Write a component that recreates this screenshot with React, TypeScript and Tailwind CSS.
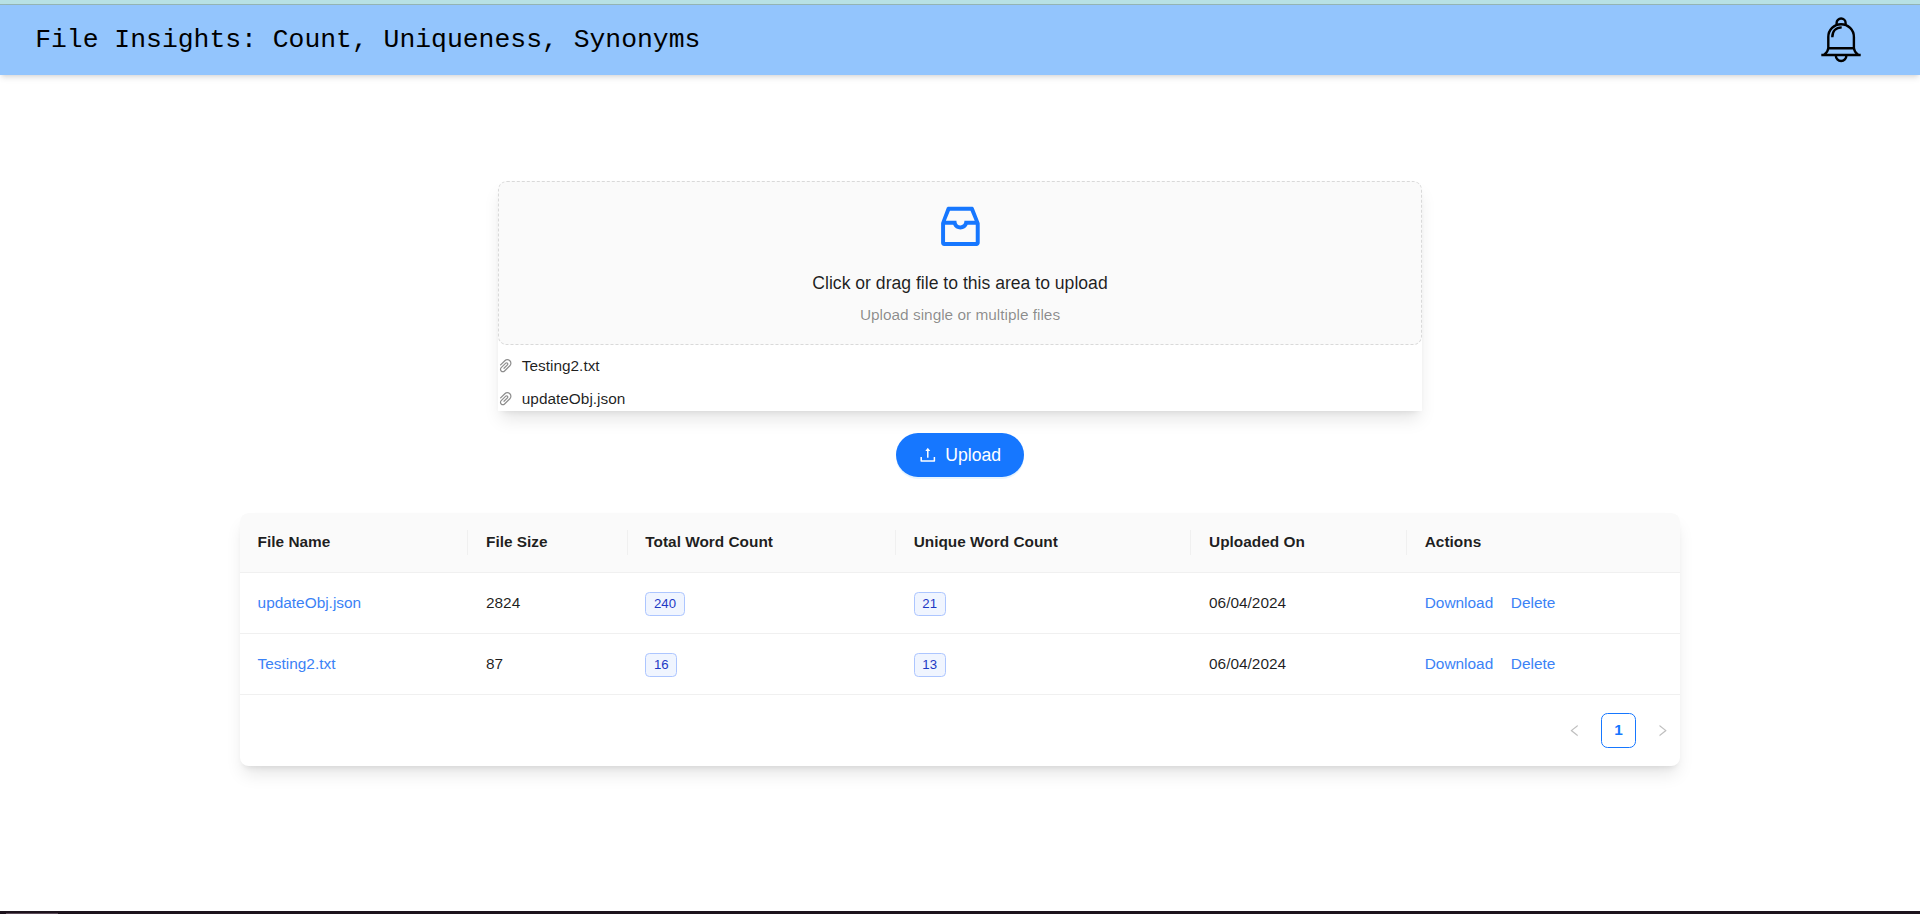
import React from "react";
import { AiOutlineInbox, AiOutlinePaperClip, AiOutlineUpload, AiOutlineLeft, AiOutlineRight } from "react-icons/ai";

const pending = ["Testing2.txt", "updateObj.json"];

const columns = ["File Name", "File Size", "Total Word Count", "Unique Word Count", "Uploaded On", "Actions"];

const rows = [
  { name: "updateObj.json", size: 2824, total: 240, unique: 21, date: "06/04/2024" },
  { name: "Testing2.txt", size: 87, total: 16, unique: 13, date: "06/04/2024" },
];

const grid = "grid grid-cols-[228.4px_159.3px_268.4px_295.4px_215.7px_1fr]";

function Bell() {
  return (
    <svg className="mt-px" width="44" height="48" viewBox="0 0 44 48" fill="none" stroke="#000" strokeWidth="2.4">
      <path d="M16.6 7.6V6a4.5 4.5 0 0 1 9 0v1.6" />
      <path d="M8.3 31.3V20a12.8 12.8 0 0 1 25.6 0v11.3" />
      <path d="M8.3 31.3h25.6M8.3 31c-.3 3-2 5.4-4.3 7M33.9 31c.3 3 2 5.4 4.3 7" />
      <path d="M1.3 38h39.4" />
      <path d="M15.8 38.5a5.3 5.5 0 0 0 10.6 0" />
      <path d="M12.3 20.3c0-6 3.5-9.7 9.4-9.9" />
    </svg>
  );
}

function Tag({ value }: { value: number }) {
  return (
    <span className="mt-px inline-block rounded-[4.4px] border border-[#adc6ff] bg-[#f0f5ff] px-[7.7px] text-[13.2px] leading-[22px] text-[#1d39c4]">
      {value}
    </span>
  );
}

export default function App() {
  return (
    <div className="flex h-[914px] flex-col overflow-hidden bg-white font-['Liberation_Sans',Arial,sans-serif] text-[15.4px] leading-[24.2px] text-black/88">
      <div className="h-[5px] shrink-0 border-b border-[#94b5b4] bg-[#b7e1e4]" />
      <header className="flex h-[70px] shrink-0 items-center justify-between bg-[#93c5fd] pl-[35.2px] pr-14 shadow-[0_4px_6px_-1px_rgba(0,0,0,0.1),0_2px_4px_-2px_rgba(0,0,0,0.1)]">
        <h1 className="pb-px font-['Liberation_Mono',monospace] text-[26.4px] leading-9 text-black">
          File Insights: Count, Uniqueness, Synonyms
        </h1>
        <Bell />
      </header>

      <main className="flex grow flex-col items-center pt-[106px]">
        <section className="h-[230px] w-[924px] shadow-[0_11px_16.5px_-3.3px_rgba(0,0,0,0.1),0_4.4px_6.6px_-4.4px_rgba(0,0,0,0.1)]">
          <div className="flex h-[164px] flex-col items-center rounded-[8.8px] border border-dashed border-[#d9d9d9] bg-[#fafafa] pt-[17.6px]">
            <AiOutlineInbox className="size-[52.8px] text-[#1677ff]" />
            <p className="mt-[18px] text-[17.6px] leading-[26.4px]">Click or drag file to this area to upload</p>
            <p className="mt-[6px] text-black/45">Upload single or multiple files</p>
          </div>
          <ul>
            {pending.map((name) => (
              <li key={name} className="mt-[8.8px] flex h-[24.2px] items-center">
                <AiOutlinePaperClip viewBox="64 64 896 896" className="size-[15.4px] text-black/45" />
                <span className="pl-[8.4px]">{name}</span>
              </li>
            ))}
          </ul>
        </section>

        <button className="mt-[22px] flex h-11 w-32 items-center justify-center gap-[8.8px] rounded-full bg-[#1677ff] text-[17.6px] text-white shadow-[0_2px_0_rgba(5,145,255,0.1)]">
          <AiOutlineUpload viewBox="64 64 896 896" className="size-[17.6px]" />
          Upload
        </button>

        <section className="mt-9 h-[253px] w-[1440px] overflow-hidden rounded-[8.8px] bg-white shadow-[0_11px_16.5px_-3.3px_rgba(0,0,0,0.1),0_4.4px_6.6px_-4.4px_rgba(0,0,0,0.1)]">
          <div className={`${grid} h-[60px] items-center border-b border-[#f0f0f0] bg-[#fafafa] font-bold`}>
            {columns.map((c) => (
              <div key={c} className="flex h-[25px] items-center border-r border-[#f0f0f0] pl-[17.6px] last:border-r-0">
                {c}
              </div>
            ))}
          </div>
          {rows.map((r) => (
            <div key={r.name} className={`${grid} h-[61px] items-center border-b border-[#f0f0f0] *:pl-[17.6px]`}>
              <div className="text-[#3b82f6]">{r.name}</div>
              <div>{r.size}</div>
              <div><Tag value={r.total} /></div>
              <div><Tag value={r.unique} /></div>
              <div>{r.date}</div>
              <div className="flex gap-[17.6px] text-[#3b82f6]">
                <a>Download</a>
                <a>Delete</a>
              </div>
            </div>
          ))}
          <div className="mt-[18px] flex items-center justify-end">
            <span className="flex size-[35px] items-center justify-center text-black/25">
              <AiOutlineLeft viewBox="64 64 896 896" className="size-[13.2px]" />
            </span>
            <span className="mx-[9px] flex size-[35px] items-center justify-center rounded-[6.6px] border border-[#1677ff] font-bold text-[#1677ff]">
              1
            </span>
            <span className="flex size-[35px] items-center justify-center text-black/25">
              <AiOutlineRight viewBox="64 64 896 896" className="size-[13.2px]" />
            </span>
          </div>
        </section>
      </main>
      <div className="flex h-[3px] shrink-0 items-end bg-[#1d131d] pl-[6px]">
        <div className="h-px w-[52px] bg-[#5a4a58]" />
      </div>
    </div>
  );
}
